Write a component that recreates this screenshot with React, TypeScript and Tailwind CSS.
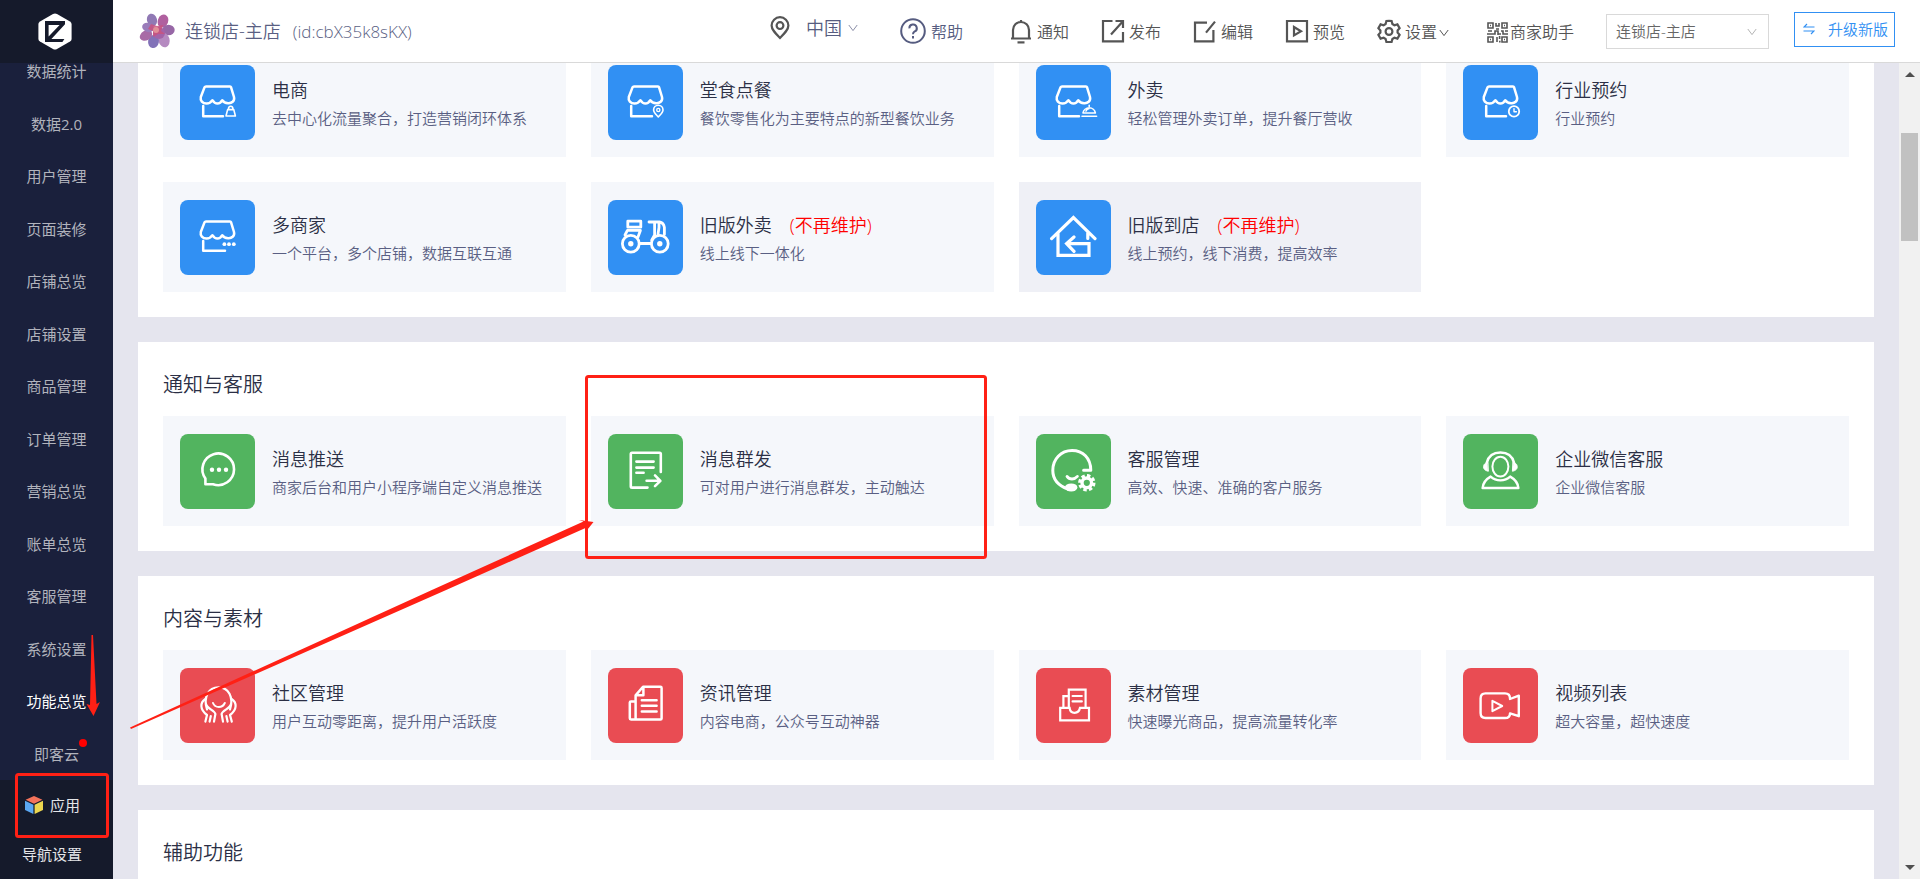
import type { ReactNode } from 'react';
import { clsx } from 'clsx';

const sideItems = [
  '数据统计',
  '数据2.0',
  '用户管理',
  '页面装修',
  '店铺总览',
  '店铺设置',
  '商品管理',
  '订单管理',
  '营销总览',
  '账单总览',
  '客服管理',
  '系统设置',
  '功能总览',
  '即客云',
];

const Awning = () => (
  <path d="M26 21.5H50Q50.8 21.5 51 22.2L54 32C55 36 51.5 38.6 48 38.2C45.5 38 43.5 37 42.3 35.2C41 37.6 39.2 38.6 37.4 38.6C35.4 38.6 33.8 37.4 32.4 35.2C31 37.4 29 38.6 26.6 38.6C22.5 38.6 20 35.5 20.8 32L24.5 22.4Q25 21.5 26 21.5Z" />
);

const icons: Record<string, ReactNode> = {
  shop: (
    <>
      <Awning />
      <path d="M23.2 41V51.3H43" />
      <path d="M47.6 44.6H53.8L55.4 51H46ZM48.4 44.4Q48.4 41.2 50.7 41.2T53 44.4" strokeWidth="1.6" />
    </>
  ),
  dine: (
    <>
      <Awning />
      <path d="M23.2 41V51.3H44" />
      <path d="M50.3 52C47.5 49 45.6 47.4 45.6 45A4.7 4.7 0 0 1 55 45C55 47.4 53 49 50.3 52Z" strokeWidth="1.6" />
      <circle cx="50.3" cy="45" r="1.6" strokeWidth="1.4" />
    </>
  ),
  takeout: (
    <>
      <Awning />
      <path d="M23.2 41V51.3H43" />
      <path d="M47 48A6.3 6.3 0 0 1 59.4 48ZM46 51.2H60.6M53.2 40.2V41.4M50 46Q50.8 44.2 52.6 43.8" strokeWidth="1.6" />
    </>
  ),
  booking: (
    <>
      <Awning />
      <path d="M23.2 41V51.3H43" />
      <circle cx="51" cy="46.4" r="5.2" strokeWidth="1.8" />
      <path d="M51 43.8V46.8H53.4" strokeWidth="1.4" />
    </>
  ),
  merchants: (
    <>
      <Awning />
      <path d="M23.2 41V50.8H45" />
      <g fill="#fff" stroke="none">
        <circle cx="44.4" cy="44.2" r="1.9" />
        <circle cx="49" cy="44.2" r="1.9" />
        <circle cx="53.8" cy="44.2" r="1.9" />
      </g>
    </>
  ),
  scooter: (
    <g strokeWidth="2.8">
      <circle cx="22.8" cy="43.8" r="8.4" />
      <circle cx="51.8" cy="43.8" r="8.4" />
      <rect x="19.8" y="21.2" width="13" height="6" />
      <path d="M31.5 43.5H43M17 35L19.4 30.4H32.4L30 37M41 22H51.5Q55.6 22.6 56.4 27.4V34.6M51 22V27.4L50 34M46.6 22V35L43.8 40" />
      <g fill="#fff" stroke="none">
        <circle cx="22.8" cy="43.8" r="2.7" />
        <circle cx="51.8" cy="43.8" r="2.7" />
      </g>
    </g>
  ),
  house: (
    <g strokeWidth="3.2">
      <path
        d="M15.6 38.6L37.4 17.6L59 38.6M51.8 33V38.4M22 33V55.4H53V43.6H31M38 37L30.6 43.6L38 51.4"
        strokeLinejoin="miter"
      />
    </g>
  ),
  chat: (
    <>
      <path d="M25.4 50.3V44.5A15.8 15.8 0 1 1 33 50.2Z" strokeWidth="2.6" />
      <g fill="#fff" stroke="none">
        <circle cx="32" cy="35.7" r="2.2" />
        <circle cx="39" cy="35.7" r="2.2" />
        <circle cx="46" cy="35.7" r="2.2" />
      </g>
    </>
  ),
  broadcast: (
    <g strokeWidth="2.6">
      <path d="M52.8 38V20Q52.8 18.8 51.6 18.8H24Q22.8 18.8 22.8 20V52.4Q22.8 53.6 24 53.6H39.5M28.4 27.6H45.6M28.4 33.6H45.6M28.4 38.8H35.6M38.6 46.8H52M47 41.4L52.4 46.8L47 52.2" />
    </g>
  ),
  service: (
    <>
      <path d="M47.6 36.2H54.8C54.6 24 47 16.6 36 16.6C25 16.6 16.8 25 16.8 36.4C16.8 45 22.6 51.6 32 55" strokeWidth="3" />
      <path d="M31 42.4Q32.8 45 36 45T41.4 42.4" strokeWidth="2.8" />
      <ellipse cx="35.2" cy="53.4" rx="6.2" ry="4" fill="#fff" stroke="none" />
      <circle cx="50.8" cy="48.8" r="4.8" strokeWidth="3.4" />
      <circle cx="50.8" cy="48.8" r="7.2" strokeWidth="3" strokeDasharray="3.4 2.25" strokeLinecap="butt" />
    </>
  ),
  wecom: (
    <>
      <ellipse cx="37.4" cy="32.6" rx="8" ry="9.8" strokeWidth="2" />
      <path d="M23.8 28.6C25.6 21.6 31 18.4 37.4 18.4S49.2 21.6 51 28.6" />
      <path
        d="M24.6 28.4C21.4 29 20.6 31 20.6 33S22 36.6 25 37.2ZM50.2 28.4C53.4 29 54.2 31 54.2 33S52.8 36.6 49.8 37.2Z"
        fill="#fff"
        strokeWidth="1"
      />
      <path
        d="M27.6 42.6C22.6 45.4 20 49.4 19.6 54H55.4C55 49.4 52.2 45.4 47.2 42.6C44.6 45 41.2 46.4 37.4 46.4S30.2 45 27.6 42.6Z"
        strokeWidth="2.4"
      />
    </>
  ),
  community: (
    <g strokeWidth="2.2">
      <path d="M27 41.5C23 29 28.5 19.4 38.5 19.4S54 29 50 41.5" />
      <path d="M33 35Q34.6 39 38.8 39T44.8 35" strokeWidth="2" />
      <path d="M25.4 31C20 34.5 19.6 41.5 27 47L25.4 53.6M51.6 31C57 34.5 57.4 41.5 50 47L51.8 53.6" />
      <path d="M26 36C27 41 34.6 42 35.4 46L34 53.6M30.8 48L29.6 53.6M51 36C50 41 42.4 42 41.6 46L43 53.6M46.4 48L47.6 53.6" />
    </g>
  ),
  news: (
    <g strokeWidth="2.5">
      <path d="M35 18.8H52.4Q53.6 18.8 53.6 20V50.4Q53.6 51.4 52.4 51.4H28.8Q27.6 51.4 27.6 50.4V27.4ZM35.4 19.4V27.2H28.4M26.6 33.4H23Q21.8 33.4 21.8 34.6V50.2Q21.8 51.4 23 51.4H28M33.8 32.2H48.6M33.8 37.8H48.6M33.8 43.4H48.6" />
    </g>
  ),
  material: (
    <g strokeWidth="2.2" strokeLinejoin="miter">
      <path d="M32.8 39V21.6H49.6V39M31.6 28.2H27.4V39M36.6 28H45.8M36.6 33.4H45.8" />
      <path d="M24.2 39.8H33.6C34 43.2 35.4 44.8 38.6 44.8S43.4 43.2 44 39.8H53V52.4H24.2Z" />
    </g>
  ),
  video: (
    <>
      <path
        d="M47 30.5C47 27 45.5 25.4 42 25.4H22.5Q17.6 25.4 17.6 30.4V45Q17.6 50 22.5 50H42C45.5 50 47 48.5 47 45.4L55.8 48.2V27.6L47 31"
        strokeWidth="2.4"
      />
      <path d="M29.4 32.8V43.2L39.2 38Z" strokeWidth="2" />
    </>
  ),
};

interface CardItem {
  icon: string;
  title: string;
  desc: string;
  deprecated?: boolean;
  active?: boolean;
}

interface Section {
  title?: string;
  color: string;
  items: CardItem[];
}

const sections: Section[] = [
  {
    color: 'bg-[#3190f3]',
    items: [
      { icon: 'shop', title: '电商', desc: '去中心化流量聚合，打造营销闭环体系' },
      { icon: 'dine', title: '堂食点餐', desc: '餐饮零售化为主要特点的新型餐饮业务' },
      { icon: 'takeout', title: '外卖', desc: '轻松管理外卖订单，提升餐厅营收' },
      { icon: 'booking', title: '行业预约', desc: '行业预约' },
      { icon: 'merchants', title: '多商家', desc: '一个平台，多个店铺，数据互联互通' },
      { icon: 'scooter', title: '旧版外卖', desc: '线上线下一体化', deprecated: true },
      { icon: 'house', title: '旧版到店', desc: '线上预约，线下消费，提高效率', deprecated: true, active: true },
    ],
  },
  {
    title: '通知与客服',
    color: 'bg-[#52b45f]',
    items: [
      { icon: 'chat', title: '消息推送', desc: '商家后台和用户小程序端自定义消息推送' },
      { icon: 'broadcast', title: '消息群发', desc: '可对用户进行消息群发，主动触达' },
      { icon: 'service', title: '客服管理', desc: '高效、快速、准确的客户服务' },
      { icon: 'wecom', title: '企业微信客服', desc: '企业微信客服' },
    ],
  },
  {
    title: '内容与素材',
    color: 'bg-[#e94c53]',
    items: [
      { icon: 'community', title: '社区管理', desc: '用户互动零距离，提升用户活跃度' },
      { icon: 'news', title: '资讯管理', desc: '内容电商，公众号互动神器' },
      { icon: 'material', title: '素材管理', desc: '快速曝光商品，提高流量转化率' },
      { icon: 'video', title: '视频列表', desc: '超大容量，超快速度' },
    ],
  },
  { title: '辅助功能', color: 'bg-[#3190f3]', items: [] },
];

function Card({ item, color }: { item: CardItem; color: string }) {
  return (
    <a
      href="#"
      className={clsx('flex h-[110px] px-[17px] py-[18px]', item.active ? 'bg-[#eff0f6]' : 'bg-[#f5f7fb]')}
    >
      <span className={clsx('size-[75px] shrink-0 rounded-lg', color)}>
        <svg
          viewBox="0 0 75 75"
          className="size-full"
          fill="none"
          stroke="#fff"
          strokeWidth="2.5"
          strokeLinecap="round"
          strokeLinejoin="round"
        >
          {icons[item.icon]}
        </svg>
      </span>
      <span className="ml-[17px] flex flex-col pt-[11px] whitespace-nowrap">
        <span className="text-[18px] leading-7 text-[#2b2f45]">
          {item.title}
          {item.deprecated && <span className="ml-[18px] text-[#ff0000]">(不再维护)</span>}
        </span>
        <span className="text-[15px] leading-7 text-[#5a5f83]">{item.desc}</span>
      </span>
    </a>
  );
}

function Logo() {
  return (
    <svg viewBox="0 0 34 37" className="h-[37px] w-[34px]">
      <path
        d="M17 0.5Q18 0.5 19 1L32 8.4Q33.6 9.4 33.6 11V26Q33.6 27.6 32 28.6L19 36Q17 37 15 36L2 28.6Q0.4 27.6 0.4 26V11Q0.4 9.4 2 8.4L15 1Q16 0.5 17 0.5Z"
        fill="#fff"
      />
      <path d="M7 8H27V11.2L13.4 26H26.4L24.4 29H7ZM10.6 12V23.6L21.6 12Z" fill="#151a2b" fillRule="evenodd" />
    </svg>
  );
}

function Cube() {
  return (
    <svg viewBox="0 0 18 18" className="size-[18px]">
      <path d="M9 0L17.4 3.8L9 7.8L0.6 3.8Z" fill="#f3735b" />
      <path d="M0 4.8L8.4 8.8V18L0 14Z" fill="#5aa7f2" />
      <path d="M18 4.8L9.6 8.8V18L18 14Z" fill="#ecd64f" />
    </svg>
  );
}

function Sidebar() {
  return (
    <aside className="flex w-[113px] shrink-0 flex-col bg-[#1a203c] text-[15px] font-normal text-[#b1b3bc]">
      <div className="z-10 flex h-[63px] shrink-0 items-center justify-center bg-[#151a2b] pr-1">
        <Logo />
      </div>
      <nav className="-mt-[18px] flex min-h-0 flex-1 flex-col">
        {sideItems.map((label) => (
          <a
            key={label}
            href="#"
            className={clsx('flex flex-1 items-center justify-center', label === '功能总览' && 'text-white')}
          >
            <span className="relative">
              {label}
              {label === '即客云' && <i className="absolute -top-1 -right-2 size-2 rounded-full bg-[#ff0000]" />}
            </span>
          </a>
        ))}
      </nav>
      <div className="flex h-[99px] shrink-0 flex-col bg-[#151a2b] text-[#e4e5e8]">
        <a href="#" className="flex flex-1 items-center gap-[7px] pl-[25px]">
          <Cube />
          应用
        </a>
        <a href="#" className="flex flex-1 items-center pl-[22px]">
          导航设置
        </a>
      </div>
    </aside>
  );
}

function Flower() {
  return (
    <svg viewBox="0 0 36 36" className="size-9">
      <ellipse cx="13" cy="7" rx="5" ry="6.4" fill="#9079b4" transform="rotate(-15 13 7)" />
      <ellipse cx="24" cy="8" rx="5.2" ry="6.6" fill="#b0609f" transform="rotate(20 24 8)" />
      <ellipse cx="29.5" cy="17" rx="6.2" ry="5.2" fill="#9767a6" />
      <ellipse cx="25" cy="27" rx="5.6" ry="7.4" fill="#b58ac0" transform="rotate(-15 25 27)" />
      <ellipse cx="14.5" cy="28.5" rx="5.4" ry="6.6" fill="#8272b8" transform="rotate(10 14.5 28.5)" />
      <ellipse cx="7" cy="22.5" rx="6.6" ry="4.8" fill="#a86ba6" transform="rotate(-30 7 22.5)" />
      <ellipse cx="9" cy="14.5" rx="6" ry="4.6" fill="#9a7cba" transform="rotate(20 9 14.5)" />
      <ellipse cx="20" cy="20" rx="6" ry="6" fill="#a463a8" />
      <path d="M12 11L18 13L24 12L22 18L26 21L19 21L14 24L14 18L9 16Z" fill="#c9527f" opacity="0.85" />
      <circle cx="17" cy="17" r="3" fill="#e08f98" />
    </svg>
  );
}

function ChevronDown({ className }: { className?: string }) {
  return (
    <svg viewBox="0 0 10 8" className={clsx('h-2 w-2.5', className)} fill="none" stroke="currentColor">
      <path d="M0.8 1L5 6.6L9.2 1" />
    </svg>
  );
}

const navIcons: Record<string, ReactNode> = {
  通知: (
    <>
      <path d="M4 19.5V11A8 8 0 0 1 20 11V19.5M2 19.5H22M12 1V3" />
      <path d="M8.5 23.4H15.5" />
    </>
  ),
  发布: (
    <>
      <path d="M11.5 2H2V22.4H22V13M14.5 2H22V9M21 3.2L10 15.5" />
    </>
  ),
  编辑: (
    <>
      <path d="M14 3.6H2V22.4H20.4V11M22 2.6L13 13.6" />
    </>
  ),
  预览: (
    <>
      <path d="M2 2H22V22.4H2ZM9 8V16.4L16 12.2Z" />
    </>
  ),
};

function NavButton({ label, icon, children }: { label: string; icon: ReactNode; children?: ReactNode }) {
  return (
    <button className="flex items-center whitespace-nowrap">
      <svg viewBox="0 0 24 25" className="mr-1 h-[25px] w-6 shrink-0" fill="none" stroke="currentColor" strokeWidth="2.2">
        {icon}
      </svg>
      <span className="pt-0.5">{label}</span>
      {children}
    </button>
  );
}

function Header() {
  return (
    <header className="flex h-[63px] shrink-0 items-center border-b border-[#d9d9d9] bg-white pr-[25px] pl-[26px]">
      <Flower />
      <h1 className="ml-2.5 text-[18px] whitespace-nowrap text-[#5a5f83]">
        连锁店-主店<span className="ml-3 text-[17px]">(id:cbX35k8sKX)</span>
      </h1>

      <div className="ml-auto flex items-center text-[16px] text-[#555]">
        <button className="flex items-center pb-1.5 text-[18px] text-[#565c80]">
          <svg viewBox="0 0 20 24" className="h-6 w-5 text-[#555]" fill="none" stroke="currentColor" strokeWidth="2.2">
            <path d="M10 22C5 17 1.6 13.6 1.6 9.6A8.4 8.4 0 0 1 18.4 9.6C18.4 13.6 15 17 10 22Z" />
            <circle cx="10" cy="9.6" r="3.4" />
          </svg>
          <span className="ml-4">中国</span>
          <ChevronDown className="ml-1.5 text-[#8b8fa8]" />
        </button>
        <button className="ml-[42px] flex items-center gap-[5px] text-[#565c80]">
          <svg viewBox="0 0 26 26" className="size-[26px]" fill="none" stroke="currentColor" strokeWidth="2">
            <circle cx="13" cy="13" r="11.8" />
            <path d="M9.4 10.4A3.7 3.7 0 1 1 14.4 13.6Q13 14.4 13 16.2M13 18V20.4" />
          </svg>
          <span className="pt-0.5">帮助</span>
        </button>
        <div className="ml-[46px] flex items-center gap-8">
          {Object.keys(navIcons).map((label) => (
            <NavButton key={label} label={label} icon={navIcons[label]} />
          ))}
          <NavButton
            label="设置"
            icon={
              <>
                <path d="M12 1.8L14.6 2L15.4 5L17.4 6.2L20.4 5.4L22.6 9.2L20.6 11.4V13.6L22.6 15.8L20.4 19.6L17.4 18.8L15.4 20L14.6 23H9.4L8.6 20L6.6 18.8L3.6 19.6L1.4 15.8L3.4 13.6V11.4L1.4 9.2L3.6 5.4L6.6 6.2L8.6 5L9.4 2Z" />
                <circle cx="12" cy="12.5" r="3.4" />
              </>
            }
          >
            <ChevronDown className="mt-1 ml-0.5" />
          </NavButton>
        </div>
        <button className="ml-[38px] flex items-center gap-0.5 pt-0.5 whitespace-nowrap">
          <svg viewBox="0 0 21 21" className="size-[21px]" fill="none" stroke="currentColor" strokeWidth="1.6">
            <path d="M1 1H6V6H1ZM15 1H20V6H15ZM1 15H6V20H1ZM15 15H20V20H15Z" />
            <path d="M3 3.5H4M17 3.5H18M3 17.5H4M17 17.5H18M9 1V4H12V1M9 7H12M1 9H5M0 12H8V9H11V13M14 9H16V12H21M18 9H21M10 15V20M12.6 14V17M12 19.6H13.6M11 12H14" />
          </svg>
          商家助手
        </button>
        <div className="relative ml-8">
          <select
            aria-label="店铺"
            className="h-[35px] w-[163px] appearance-none border border-[#d9d9d9] bg-white pl-[9px] text-[15px] text-[#666]"
          >
            <option>连锁店-主店</option>
          </select>
          <ChevronDown className="pointer-events-none absolute top-3.5 right-3 text-[#b3b3b3]" />
        </div>
        <button className="mb-1 ml-[25px] flex h-[35px] w-[101px] items-center justify-between border border-[#3190f3] pr-1.5 pl-2 text-[15px] text-[#3190f3]">
          <svg viewBox="0 0 12 12" className="size-3" fill="none" stroke="currentColor" strokeWidth="1.2">
            <path d="M11.5 4H1L4 1M0.5 8H11L8 11" />
          </svg>
          <span>升级新版</span>
        </button>
      </div>
    </header>
  );
}

function Scrollbar() {
  return (
    <div className="flex w-[21px] shrink-0 flex-col items-center bg-[#f1f1f1]">
      <svg viewBox="0 0 10 5" className="mt-[9px] h-[5px] w-2.5 shrink-0">
        <path d="M5 0L10 5H0Z" fill="#505050" />
      </svg>
      <div className="mt-14 h-[108px] w-[17px] bg-[#c1c1c1]" />
      <svg viewBox="0 0 10 5" className="mt-auto mb-[9px] h-[5px] w-2.5 shrink-0">
        <path d="M0 0H10L5 5Z" fill="#505050" />
      </svg>
    </div>
  );
}

function Annotations() {
  return (
    <svg className="pointer-events-none absolute inset-0 z-20 size-full" fill="#ff2015">
      <rect x="586.5" y="376.5" width="399" height="181" rx="2" fill="none" stroke="#ff2015" strokeWidth="3" />
      <rect x="16.5" y="774.5" width="91" height="62" rx="2" fill="none" stroke="#ff2015" strokeWidth="3" />
      <path d="M91.5 635H93L96.5 704L100 702L93.5 716L86.5 704L90 705Z" />
      <path d="M130 727.5L433 589.5L583.5 521.5L579 520L593.5 522L585.5 532V528L445 590.5L131 729Z" />
    </svg>
  );
}

export default function App() {
  return (
    <div className="relative flex h-screen overflow-hidden bg-[#e5e5ee] font-['Open_Sans','Noto_Sans_CJK_SC',sans-serif] font-[350]">
      <Sidebar />
      <div className="flex min-w-0 flex-1 flex-col">
        <Header />
        <div className="flex min-h-0 flex-1">
          <main className="min-w-0 flex-1 overflow-hidden px-[25px]">
            <div className="-mt-4 flex flex-col gap-[25px]">
              {sections.map((section) => (
                <section key={section.color + section.title} className="bg-white px-[25px] pb-[25px]">
                  {section.title && (
                    <h2 className="pt-7 pb-4 text-[20px] leading-[30px] text-[#2b2f45]">{section.title}</h2>
                  )}
                  <div className="grid grid-cols-4 gap-[25px]">
                    {section.items.map((item) => (
                      <Card key={item.title} item={item} color={section.color} />
                    ))}
                  </div>
                </section>
              ))}
            </div>
          </main>
          <Scrollbar />
        </div>
      </div>
      <Annotations />
    </div>
  );
}
